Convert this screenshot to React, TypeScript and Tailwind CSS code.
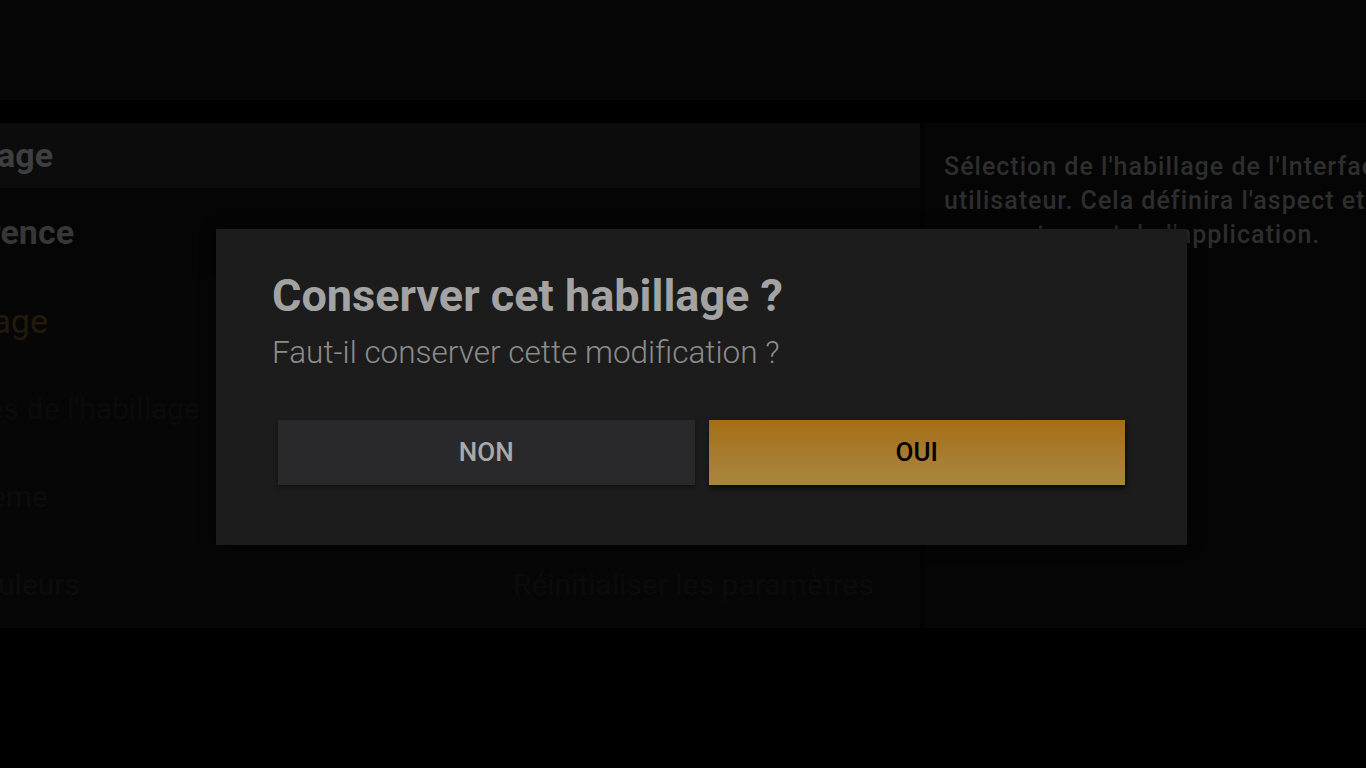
const font = { fontFamily: "Roboto, 'Liberation Sans', sans-serif" }

const ClippedLabel = ({ text, end, className }: { text: string; end: string; className: string }) => (
  <div className={`${end} overflow-hidden flex justify-end`}>
    <span className={`whitespace-nowrap ${className}`}>{text}</span>
  </div>
)

export default function App() {
  return (
    <div className="relative w-[1366px] h-[768px] bg-black overflow-hidden" style={font}>
      {/* Header */}
      <div className="h-[100px] bg-[#050505]" />
      <div className="h-[23px]" />

      {/* Settings body (dimmed) */}
      <div className="h-[505px] flex bg-[#060606] overflow-hidden">
        <div className="w-[920px] flex flex-col">
          <div className="h-[65px] bg-[#0c0c0c] flex items-center">
            <ClippedLabel text="Habillage" end="w-[53px]" className="text-[34px] font-bold text-[#3f3f3f]" />
          </div>
          <div className="h-[90px] bg-[#050505] flex items-center">
            <ClippedLabel text="Apparence" end="w-[74px]" className="text-[34px] font-bold text-[#373737]" />
          </div>
          <div className="h-[88px] flex items-center">
            <ClippedLabel text="Habillage" end="w-[48px]" className="text-[34px] text-[#231a0b]" />
          </div>
          <div className="h-[88px] flex items-center">
            <ClippedLabel text="Paramètres de l'habillage" end="w-[200px]" className="text-[30px] text-[#0b0b0b]" />
          </div>
          <div className="h-[88px] flex items-center">
            <ClippedLabel text="Thème" end="w-[48px]" className="text-[30px] text-[#0c0c0c]" />
          </div>
          <div className="h-[88px] flex items-center justify-between pr-[46px]">
            <ClippedLabel text="Couleurs" end="w-[80px]" className="text-[30px] text-[#0c0c0c]" />
            <span className="text-[30px] text-[#0b0b0b] whitespace-nowrap">Réinitialiser les paramètres</span>
          </div>
        </div>
        <div className="w-[5px] bg-[#030303]" />
        <div className="flex-1 bg-[#050505] pl-[19px] pt-[27px] overflow-hidden">
          <div className="text-[25px] leading-[34px] font-medium tracking-[1px] text-[#2e2e2e] whitespace-nowrap">
            <div>Sélection de l'habillage de l'Interface</div>
            <div>utilisateur. Cela définira l'aspect et le</div>
            <div>comportement de l'application.</div>
          </div>
        </div>
      </div>

      {/* Dialog */}
      <div className="absolute left-[216px] top-[229px] w-[971px] h-[316px] bg-[#1c1c1c] shadow-[0_0_12px_rgba(0,0,0,0.6)] pt-[40px]">
        <div className="px-[56px]">
          <div className="text-[45px] leading-[54px] font-bold text-[#a3a3a3] whitespace-nowrap">
            Conserver cet habillage ?
          </div>
          <div className="mt-[10px] text-[31.5px] leading-[40px] font-light text-[#8c8c8c] whitespace-nowrap">
            Faut-il conserver cette modification ?
          </div>
        </div>
        <div className="mt-[47px] px-[62px] flex gap-[14px]">
          <button className="flex-1 h-[65px] bg-[#29292b] text-[#a9a9a9] text-[26px] font-medium shadow-[0_2px_4px_rgba(0,0,0,0.4)]">
            NON
          </button>
          <button className="flex-1 h-[65px] bg-gradient-to-b from-[#a56e14] to-[#a8873f] text-black text-[26px] font-medium shadow-[1px_3px_5px_rgba(0,0,0,0.7)]">
            OUI
          </button>
        </div>
      </div>
    </div>
  )
}
